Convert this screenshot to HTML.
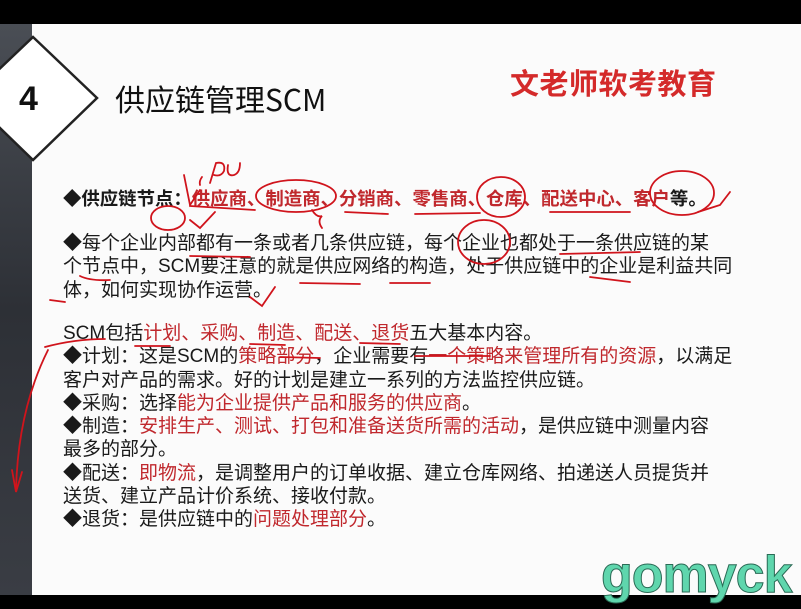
<!DOCTYPE html>
<html><head><meta charset="utf-8"><style>
*{margin:0;padding:0}
body{width:801px;height:609px;overflow:hidden;background:#000;position:relative;font-family:"Liberation Sans","Noto Sans CJK SC",sans-serif}
#left{position:absolute;left:0;top:24px;width:34px;height:571px;background:linear-gradient(#4a4e55,#2d3036 50%,#3a3d44)}
#slide{position:absolute;left:32px;top:24px;width:769px;height:571px;background:#fbfbfb}
.t{position:absolute;left:63px;font-size:19px;line-height:23.3px;color:#1a1a1a;white-space:nowrap}
.r{color:#c0282d}
b{font-weight:bold}
</style></head><body>
<div id="left"></div>
<div id="slide"></div>
<svg style="position:absolute;left:0;top:0" width="801" height="609">
<polygon points="33,37 97,98 33,160 -31,98" fill="#fff" stroke="#222" stroke-width="2.5"/>
</svg>
<div style="position:absolute;left:19px;top:80px;font-size:34px;font-weight:bold;color:#111">4</div>
<div style="position:absolute;left:115px;top:76px;font-size:30px;color:#111;white-space:nowrap;font-family:'Noto Sans CJK SC',sans-serif">供应链管理SCM</div>
<div style="position:absolute;left:510px;top:61px;font-size:29px;color:#d42a2a;font-weight:bold;white-space:nowrap;letter-spacing:0.5px">文老师软考教育</div>

<div class="t" style="top:187px;font-size:18.4px"><b>◆供应链节点：</b><b class="r">供应商、制造商、分销商、零售商、仓库、配送中心、客户</b><b>等。</b></div>
<div class="t" style="top:232px">◆每个企业内部都有一条或者几条供应链，每个企业也都处于一条供应链的某<br>个节点中，SCM要注意的就是供应网络的构造，处于供应链中的企业是利益共同<br>体，如何实现协作运营。</div>
<div class="t" style="top:322px">SCM包括<span class="r">计划、采购、制造、配送、退货</span>五大基本内容。<br>◆计划：这是SCM的<span class="r">策略部分</span>，企业需要有<span class="r">一个策略来管理所有的资源</span>，以满足<br>客户对产品的需求。好的计划是建立一系列的方法监控供应链。<br>◆采购：选择<span class="r">能为企业提供产品和服务的供应商</span>。<br>◆制造：<span class="r">安排生产、测试、打包和准备送货所需的活动</span>，是供应链中测量内容<br>最多的部分。<br>◆配送：<span class="r">即物流</span>，是调整用户的订单收据、建立仓库网络、拍递送人员提货并<br>送货、建立产品计价系统、接收付款。<br>◆退货：是供应链中的<span class="r">问题处理部分</span>。</div>

<svg style="position:absolute;left:0;top:0" width="801" height="609" fill="none" stroke="#d0141c" stroke-width="1.8" stroke-linecap="round">
<path d="M184,175 L190,205 L200,190"/>
<path d="M202,177 q-3,4 -2,8 M210,183 l6,-20 q10,-2 8,8 q-3,6 -10,4 M228,165 q-2,12 6,10 q6,-2 6,-12"/>
<path d="M190,206 L255,210"/>
<ellipse cx="296" cy="196" rx="40" ry="16"/>
<path d="M345,212 L388,214 M415,214 L480,213 M550,212 L630,212"/>
<ellipse cx="501" cy="197" rx="24" ry="20"/>
<ellipse cx="682" cy="193" rx="32" ry="22"/>
<path d="M698,212 L720,205 L730,192"/>
<ellipse cx="168" cy="218" rx="17" ry="12"/>
<path d="M190,220 L200,228 L215,212 M312,210 q5,8 10,6 q-5,5 0,12"/>
<ellipse cx="484" cy="242" rx="26" ry="22"/>
<path d="M190,256 L250,257 M560,254 L640,252 M300,283 L360,284 M390,283 L430,283 M590,277 L630,282"/>
<path d="M80,276 q10,5 30,4 M50,300 L65,302 M250,297 L262,306 L275,287"/>
<path d="M45,347 q30,-8 60,-8 M135,346 L170,346 M250,344 L285,345 M360,343 L400,344"/>
<path d="M48,350 q-30,60 -32,140"/>
<path d="M280,357 L320,358 M415,356 L490,356"/>
<path d="M12,470 L16,492 L22,472"/>
</svg>

<div style="position:absolute;left:601px;top:545px;font-size:52px;font-weight:bold;color:#5fd6ad;-webkit-text-stroke:1px #2a6a55;letter-spacing:-1px;white-space:nowrap">gomyck</div>
</body></html>
